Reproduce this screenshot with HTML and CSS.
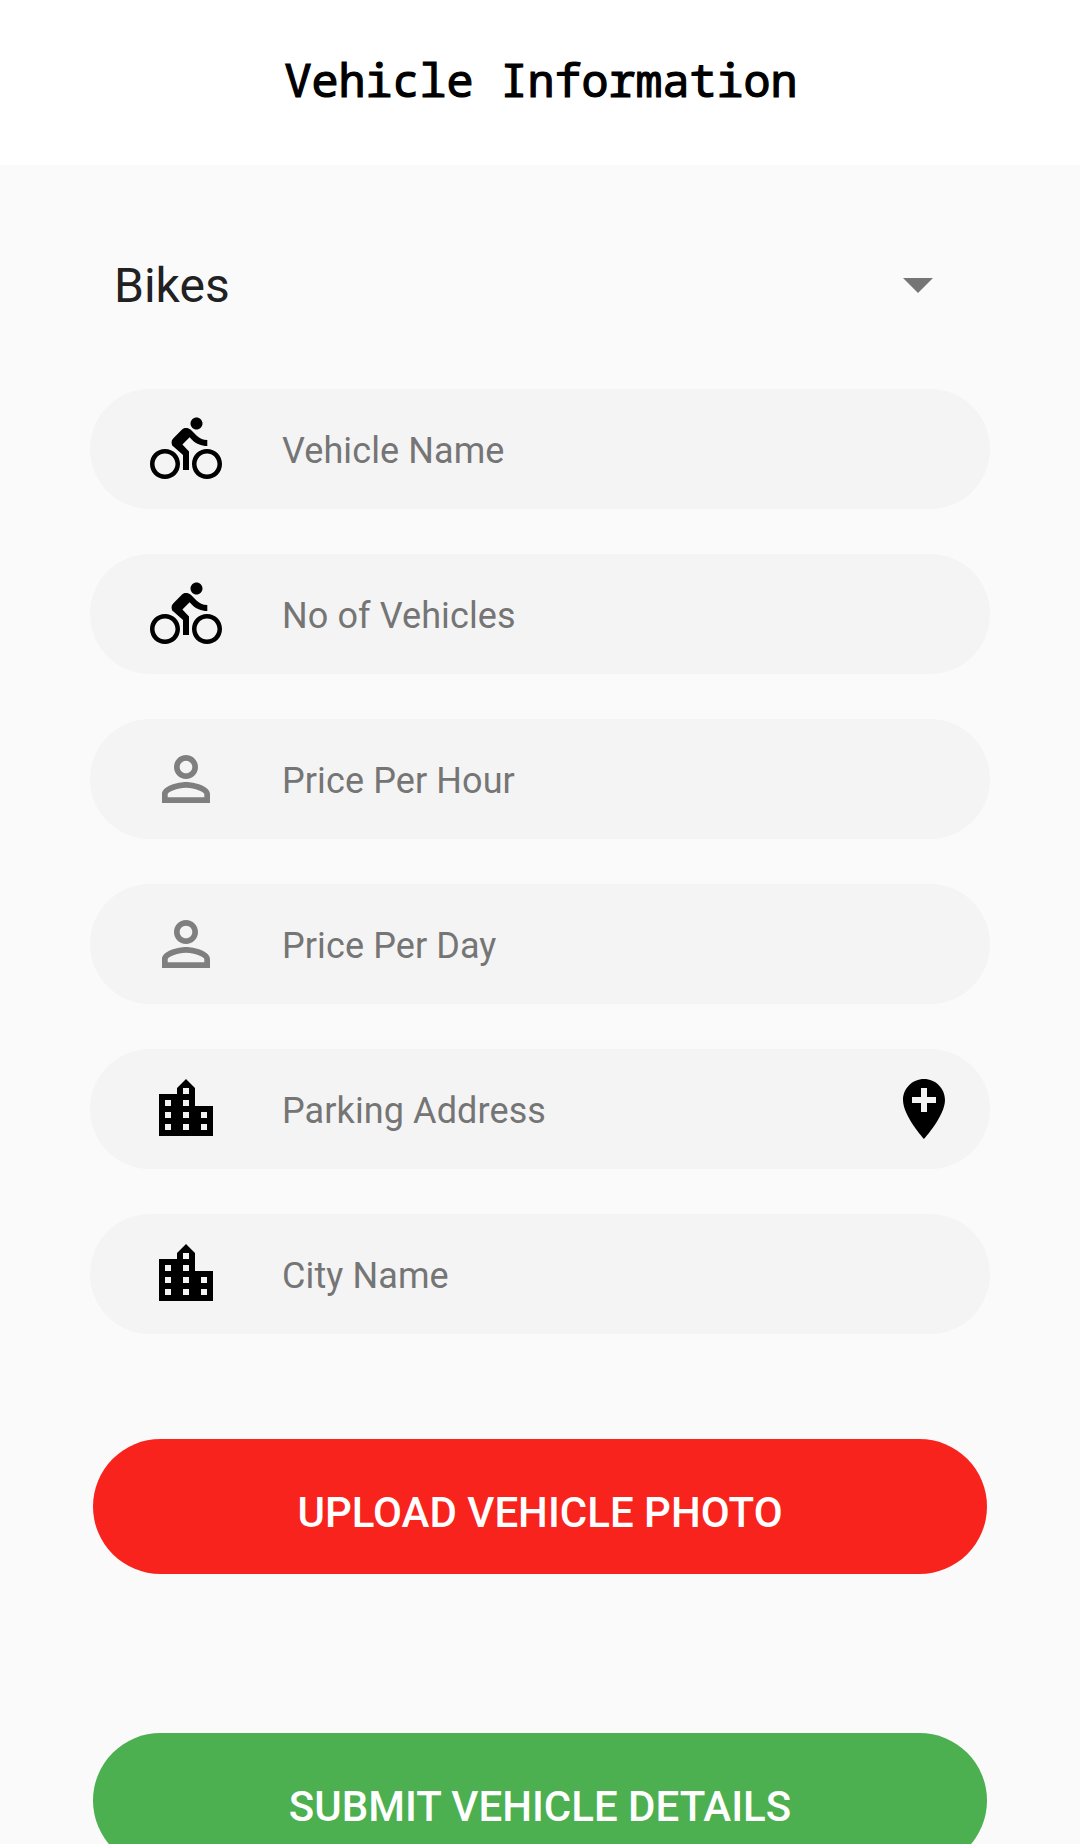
FILE: index.html
```html
<!DOCTYPE html>
<html lang="en">
<head>
<meta charset="utf-8">
<title>Vehicle Information</title>
<link rel="stylesheet" href="styles.css">
</head>
<body>
<svg class="sprite" aria-hidden="true">
  <symbol id="bike" viewBox="0 0 24 24"><path d="M15.5 5.5c1.1 0 2-.9 2-2s-.9-2-2-2-2 .9-2 2 .9 2 2 2zM5 12c-2.800 0-5 2.200-5 5s2.200 5 5 5 5-2.200 5-5-2.200-5-5-5zm0 8.500c-1.900 0-3.500-1.600-3.500-3.500s1.600-3.500 3.500-3.500 3.500 1.600 3.500 3.500-1.600 3.500-3.500 3.500zm5.800-10l2.400-2.400.8.800c1.300 1.300 3 2.100 5.100 2.100V9c-1.500 0-2.700-.6-3.600-1.500l-1.900-1.900c-.5-.4-1-.6-1.600-.6s-1.100.2-1.400.6L7.800 8.400c-.4.400-.6.900-.6 1.400 0 .6.200 1.100.6 1.400L11 14v5h2v-6.200l-2.200-2.300zM19 12c-2.800 0-5 2.200-5 5s2.200 5 5 5 5-2.200 5-5-2.200-5-5-5zm0 8.500c-1.900 0-3.500-1.600-3.500-3.500s1.600-3.500 3.500-3.500 3.500 1.600 3.500 3.500-1.600 3.500-3.500 3.500z"/></symbol>
  <symbol id="person" viewBox="0 0 24 24"><path d="M12 5.900c1.160 0 2.100.94 2.100 2.100s-.94 2.100-2.100 2.100S9.900 9.160 9.900 8s.94-2.100 2.100-2.100m0 9c2.970 0 6.100 1.460 6.100 2.100v1.100H5.900V17c0-.64 3.130-2.100 6.100-2.100M12 4C9.790 4 8 5.790 8 8s1.790 4 4 4 4-1.790 4-4-1.790-4-4-4zm0 9c-2.670 0-8 1.340-8 4v3h16v-3c0-2.660-5.330-4-8-4z"/></symbol>
  <symbol id="city" viewBox="0 0 24 24"><path d="M15 11V5l-3-3-3 3v2H3v14h18V11h-6zm-8 8H5v-2h2v2zm0-4H5v-2h2v2zm0-4H5V9h2v2zm6 8h-2v-2h2v2zm0-4h-2v-2h2v2zm0-4h-2V9h2v2zm0-4h-2V5h2v2zm6 12h-2v-2h2v2zm0-4h-2v-2h2v2z"/></symbol>
  <symbol id="pin" viewBox="0 0 24 24"><path d="M12 2C8.140 2 5 5.140 5 9c0 5.250 7 13 7 13s7-7.750 7-13c0-3.860-3.140-7-7-7zm4 8h-3v3h-2v-3H8V8h3V5h2v3h3v2z"/></symbol>
</svg>
<header class="header"><h1 class="title">Vehicle Information</h1></header>
<main class="form">
  <div class="spinner"><span>Bikes</span><svg class="arrow" viewBox="0 0 30 15"><path d="M0 0h30L15 15z"/></svg></div>
  <div class="fields">
    <div class="field"><svg class="icon"><use href="#bike"/></svg><span class="hint">Vehicle Name</span></div>
    <div class="field"><svg class="icon"><use href="#bike"/></svg><span class="hint">No of Vehicles</span></div>
    <div class="field"><svg class="icon muted"><use href="#person"/></svg><span class="hint">Price Per Hour</span></div>
    <div class="field"><svg class="icon muted"><use href="#person"/></svg><span class="hint">Price Per Day</span></div>
    <div class="field"><svg class="icon"><use href="#city"/></svg><span class="hint">Parking Address</span><svg class="icon"><use href="#pin"/></svg></div>
    <div class="field"><svg class="icon"><use href="#city"/></svg><span class="hint">City Name</span></div>
  </div>
  <button class="button upload">UPLOAD VEHICLE PHOTO</button>
  <button class="button submit">SUBMIT VEHICLE DETAILS</button>
</main>
</body>
</html>
```
FILE: styles.css
```css
* { box-sizing: border-box; }
body {
  margin: 0;
  height: 1844px;
  overflow: hidden;
  background: #fafafa;
  font-family: Roboto, sans-serif;
}
.sprite { display: none; }
.header {
  height: 165px;
  padding: 50px 0 0 2px;
  background: #fff;
  text-align: center;
}
.title {
  margin: 0;
  font: 400 45px/60px "Droid Sans Mono", "Noto Sans Mono", "Liberation Mono", monospace;
  color: #000;
  -webkit-text-stroke: 1.2px #000;
}
.form {
  display: flex;
  flex-direction: column;
  padding: 50px 90px 0;
}
.spinner {
  display: flex;
  align-items: center;
  justify-content: space-between;
  height: 141px;
  padding: 0 57px 0 24px;
  font-size: 48px;
  color: #212121;
}
.arrow { width: 30px; height: 15px; fill: #757575; }
.fields {
  display: flex;
  flex-direction: column;
  gap: 45px;
  margin-top: 33px;
}
.field {
  display: flex;
  align-items: center;
  height: 120px;
  padding: 0 30px 0 60px;
  border-radius: 60px;
  background: #f4f4f4;
}
.icon { width: 72px; height: 72px; flex: none; fill: #000; }
.muted { fill: #7f7f7f; }
.hint {
  flex: 1;
  padding: 3px 0 0 60px;
  font-size: 36px;
  letter-spacing: 0.1px;
  color: #757575;
}
.button {
  height: 135px;
  margin: 0 3px;
  padding: 12px 0 0;
  border: 0;
  border-radius: 67.5px;
  font: 500 42px Roboto, sans-serif;
  color: #fff;
}
.upload { margin-top: 105px; background: #f9231e; }
.submit { margin-top: 159px; background: #4caf50; flex: none; }
```
